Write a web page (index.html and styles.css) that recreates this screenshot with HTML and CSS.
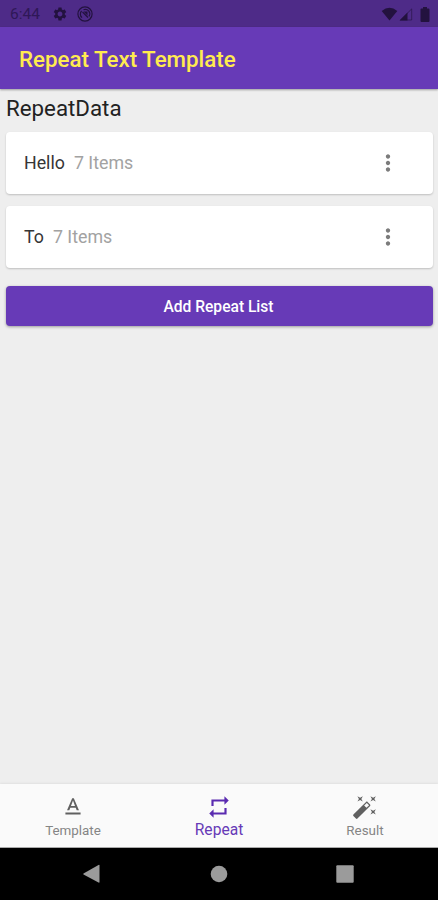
FILE: index.html
```html
<!DOCTYPE html>
<html lang="en">
<head>
<meta charset="utf-8">
<title>Repeat Text Template</title>
<link rel="stylesheet" href="styles.css">
</head>
<body>
<div class="screen">
  <div class="status">
    <span class="time">6:44</span>
    <svg class="gear" width="16" height="16" viewBox="0 0 24 24"><path d="M19.14 12.94c.04-.3.06-.61.06-.94 0-.32-.02-.64-.07-.94l2.03-1.58c.18-.14.23-.41.12-.61l-1.92-3.32c-.12-.22-.37-.29-.59-.22l-2.39.96c-.5-.38-1.03-.7-1.62-.94l-.36-2.54c-.04-.24-.24-.41-.48-.41h-3.84c-.24 0-.43.17-.47.41l-.36 2.54c-.59.24-1.13.57-1.62.94l-2.39-.96c-.22-.08-.47 0-.59.22L2.74 8.87c-.12.21-.08.47.12.61l2.03 1.58c-.05.3-.09.63-.09.94s.02.64.07.94l-2.03 1.58c-.18.14-.23.41-.12.61l1.92 3.32c.12.22.37.29.59.22l2.39-.96c.5.38 1.03.7 1.62.94l.36 2.54c.05.24.24.41.48.41h3.84c.24 0 .44-.17.47-.41l.36-2.54c.59-.24 1.13-.56 1.62-.94l2.39.96c.22.08.47 0 .59-.22l1.92-3.32c.12-.22.07-.47-.12-.61l-2.01-1.58zM12 15.6c-1.98 0-3.6-1.62-3.6-3.6s1.62-3.6 3.6-3.6 3.6 1.62 3.6 3.6-1.62 3.6-3.6 3.6z"/></svg>
    <svg class="sync" width="16" height="16" viewBox="0 0 16 16"><g fill="none" stroke="currentColor" stroke-width="1.2"><circle cx="8" cy="8" r="7.1"/><path d="M5 11.600A4.500 4.500 0 0 1 4.600 5M6.500 3.700A4.500 4.500 0 0 1 12 10.300M5.500 6l5.500 5.500"/></g><path d="M6.500 5.500h4v4z"/></svg>
    <span class="spacer"></span>
    <svg width="17" height="14" viewBox="0 0 17 14"><path d="M.7 4Q8.5-2.6 16.3 4L8.5 13.500z"/></svg>
    <svg class="signal" width="14" height="14" viewBox="0 0 14 14"><path d="M.5 13.500 8.500 5.500v8z"/><path d="M1.500 13h11.200V1.900z" fill="none" stroke="currentColor" stroke-width=".8" opacity=".75"/></svg>
    <svg class="battery" width="10" height="15" viewBox="0 0 10 15"><path d="M3 0h4v1.6h1.600q.9 0 .9.9V14q0 1-1 1h-7q-1 0-1-1V2.500q0-.9.9-.9H3z"/></svg>
  </div>
  <header class="appbar"><h1>Repeat Text Template</h1></header>
  <main>
    <h2>RepeatData</h2>
    <div class="card">
      <span class="name">Hello</span><span class="count">7 Items</span>
      <svg class="more" width="26" height="26" viewBox="0 0 24 24"><path d="M12 8c1.100 0 2-.9 2-2s-.9-2-2-2-2 .9-2 2 .9 2 2 2zm0 2c-1.100 0-2 .9-2 2s.9 2 2 2 2-.9 2-2-.9-2-2-2zm0 6c-1.100 0-2 .9-2 2s.9 2 2 2 2-.9 2-2-.9-2-2-2z"/></svg>
    </div>
    <div class="card">
      <span class="name">To</span><span class="count">7 Items</span>
      <svg class="more" width="26" height="26" viewBox="0 0 24 24"><path d="M12 8c1.100 0 2-.9 2-2s-.9-2-2-2-2 .9-2 2 .9 2 2 2zm0 2c-1.100 0-2 .9-2 2s.9 2 2 2 2-.9 2-2-.9-2-2-2zm0 6c-1.100 0-2 .9-2 2s.9 2 2 2 2-.9 2-2-.9-2-2-2z"/></svg>
    </div>
    <button class="add">Add Repeat List</button>
  </main>
  <nav class="tabs">
    <div class="tab">
      <svg width="26" height="26" viewBox="0 0 24 24"><path d="M5 17v2h14v-2H5zm4.500-4.200h5l.9 2.200h2.100L12.750 4h-1.500L6.500 15h2.100l.9-2.200zM12 5.980L13.870 11h-3.740L12 5.980z"/></svg>
      <span>Template</span>
    </div>
    <div class="tab active">
      <svg width="26" height="26" viewBox="0 0 24 24"><path d="M7 7h10v3l4-4-4-4v3H5v6h2V7zm10 10H7v-3l-4 4 4 4v-3h12v-6h-2v4z"/></svg>
      <span>Repeat</span>
    </div>
    <div class="tab">
      <svg width="26" height="26" viewBox="0 0 24 24"><path d="M7.500 5.600L10 7 8.600 4.500 10 2 7.500 3.400 5 2l1.400 2.500L5 7zm12 9.800L17 14l1.400 2.500L17 19l2.500-1.400L22 19l-1.400-2.500L22 14zM22 2l-2.500 1.400L17 2l1.400 2.500L17 7l2.500-1.400L22 7l-1.400-2.500zm-7.630 5.290c-.39-.39-1.020-.39-1.410 0L1.290 18.960c-.39.39-.39 1.020 0 1.410l2.340 2.340c.39.39 1.020.39 1.410 0L16.700 11.050c.39-.39.39-1.020 0-1.410l-2.330-2.350zm-1.030 5.490l-2.120-2.120 2.440-2.440 2.120 2.120-2.440 2.440z"/></svg>
      <span>Result</span>
    </div>
  </nav>
  <div class="sysnav">
    <svg width="18" height="20" viewBox="0 0 18 20"><path d="M.5 9.500 15.500 1q1-.5 1 .5v16.500q0 1-1 .5L.5 10.500q-.5-.5 0-1z"/></svg>
    <svg width="18" height="18" viewBox="0 0 18 18"><circle cx="9" cy="9" r="8.300"/></svg>
    <svg width="18" height="18" viewBox="0 0 18 18"><rect x=".3" y=".3" width="17.400" height="17.400" rx="1"/></svg>
  </div>
</div>
</body>
</html>
```
FILE: styles.css
```css
* { box-sizing: border-box; }
body { margin: 0; font-family: Roboto, "Liberation Sans", sans-serif; }
svg { display: block; flex: none; fill: currentColor; }
h1, h2 { margin: 0; }

.screen {
  width: 438px;
  height: 900px;
  display: flex;
  flex-direction: column;
  background: #eee;
  overflow: hidden;
}

.status {
  height: 27px;
  flex: none;
  display: flex;
  align-items: center;
  padding: 1px 8px 0 10px;
  background: #4e2b88;
  color: #23123f;
}
.time { width: 42px; font-size: 15.5px; line-height: 20px; color: #2f1857; }
.sync { margin-left: 9px; }
.spacer { flex: 1; }
.signal { margin-left: 1px; }
.battery { margin-left: 7px; }

.appbar {
  height: 62px;
  flex: none;
  display: flex;
  align-items: center;
  padding: 1px 19px 0;
  background: #673ab7;
  box-shadow: 0 1px 2px rgba(0, 0, 0, .35);
}
.appbar h1 { font-size: 22.300px; font-weight: 500; line-height: 28px; color: #ffeb4f; }

main {
  flex: 1;
  display: flex;
  flex-direction: column;
  padding: 6px 5px 0 6px;
}
h2 { height: 37px; font-size: 22.300px; font-weight: 400; line-height: 26px; color: #222; }

.card {
  height: 62px;
  margin-bottom: 12px;
  display: flex;
  align-items: center;
  padding: 0 32px 0 18px;
  border-radius: 4px;
  background: #fff;
  box-shadow: 0 1px 2px rgba(0, 0, 0, .2);
}
.name, .count { font-size: 17.800px; line-height: 20px; padding-bottom: 1px; }
.name { color: #363636; }
.count { margin-left: 9px; color: #a2a2a2; }
.more { margin-left: auto; color: #7c7c7c; }

.add {
  height: 39.5px;
  margin-top: 6px;
  padding: 2px 2px 0 0;
  border: 0;
  border-radius: 4px;
  background: #673ab7;
  color: #fff;
  font: 500 15.600px/20px Roboto, sans-serif;
  box-shadow: 0 1px 3px rgba(0, 0, 0, .35);
}

.tabs {
  height: 64px;
  flex: none;
  display: flex;
  background: #fafafa;
  border-bottom: 1px solid #aaa;
  box-shadow: 0 -1px 2px rgba(0, 0, 0, .06);
}
.tab {
  flex: 1;
  display: flex;
  flex-direction: column;
  align-items: center;
  padding-top: 10px;
  color: #606060;
}
.tab span { margin-top: 1px; font-size: 13.400px; line-height: 20px; color: #858585; }
.active { color: #5a2bb0; }
.active span { font-size: 15.600px; line-height: 18px; color: #673ab7; }

.sysnav {
  height: 52px;
  flex: none;
  display: flex;
  align-items: center;
  justify-content: space-between;
  padding: 0 84px 0 83px;
  background: #000;
  color: #9b9b9b;
}
```
